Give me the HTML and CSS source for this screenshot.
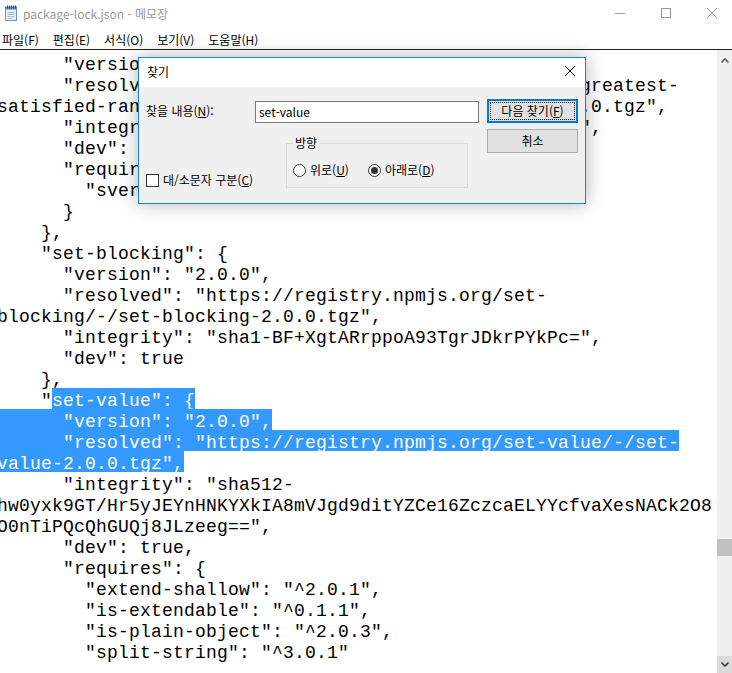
FILE: index.html
```html
<!DOCTYPE html>
<html lang="ko">

<head>
  <meta charset="UTF-8">
  <meta name="viewport" content="width=device-width, initial-scale=1.0">
  <title>package-lock.json - 메모장</title>
  <link rel="stylesheet" href="styles.css">
</head>

<body>
  <div class="window">
    <div class="titlebar">
      <svg class="app-icon" width="16" height="16" viewBox="0 0 16 16">
        <rect x="2.5" y="2.5" width="11" height="13" fill="#e8f0f8" stroke="#7d93ab" />
        <rect x="2" y="1.5" width="12" height="3" fill="#5b86b8" />
        <path d="M4.5 7.5h7M4.5 9.5h7M4.5 11.5h7M4.5 13.5h5" stroke="#a9bdd1" />
        <path d="M4.5 0.5v3M6.5 0.5v3M8.5 0.5v3M10.5 0.5v3M12.5 0.5v3" stroke="#3f4a58" />
      </svg>
      <span class="title">package-lock.json - 메모장</span>
      <div class="controls">
        <div class="ctl">
          <svg width="10" height="10" viewBox="0 0 10 10"><path d="M0 5.5h10" stroke="#9a9a9a" /></svg>
        </div>
        <div class="ctl">
          <svg width="10" height="10" viewBox="0 0 10 10"><rect x="0.5" y="0.5" width="9" height="9" fill="none" stroke="#9a9a9a" /></svg>
        </div>
        <div class="ctl">
          <svg width="10" height="10" viewBox="0 0 10 10"><path d="M0 0L10 10M10 0L0 10" stroke="#9a9a9a" /></svg>
        </div>
      </div>
    </div>

    <div class="menubar">
      <span>파일(F)</span>
      <span>편집(E)</span>
      <span>서식(O)</span>
      <span>보기(V)</span>
      <span>도움말(H)</span>
    </div>

    <div class="client">
      <div class="editor">
        <div class="lines">
          <div class="ln">      "version": "1.1.0",</div>
          <div class="ln">      "resolved": "https://registry.npmjs.org/semver-greatest-</div>
          <div class="ln">satisfied-range/-/semver-greatest-satisfied-range-1.1.0.tgz",</div>
          <div class="ln">      "integrity": "sha1-3r2fNcL+Oy2ZJr2iLw+7SwWYtWI=",</div>
          <div class="ln">      "dev": true,</div>
          <div class="ln">      "requires": {</div>
          <div class="ln">        "sver-compat": "^1.5.0"</div>
          <div class="ln">      }</div>
          <div class="ln">    },</div>
          <div class="ln">    "set-blocking": {</div>
          <div class="ln">      "version": "2.0.0",</div>
          <div class="ln">      "resolved": "https://registry.npmjs.org/set-</div>
          <div class="ln">blocking/-/set-blocking-2.0.0.tgz",</div>
          <div class="ln">      "integrity": "sha1-BF+XgtARrppoA93TgrJDkrPYkPc=",</div>
          <div class="ln">      "dev": true</div>
          <div class="ln">    },</div>
          <div class="ln">    "<span class="sel">set-value": {</span></div>
          <div class="ln"><span class="sel">      "version": "2.0.0",</span></div>
          <div class="ln"><span class="sel">      "resolved": "https://registry.npmjs.org/set-value/-/set-</span></div>
          <div class="ln"><span class="sel">value-2.0.0.tgz",</span></div>
          <div class="ln">      "integrity": "sha512-</div>
          <div class="ln">hw0yxk9GT/Hr5yJEYnHNKYXkIA8mVJgd9ditYZCe16ZczcaELYYcfvaXesNACk2O8</div>
          <div class="ln">O0nTiPQcQhGUQj8JLzeeg==",</div>
          <div class="ln">      "dev": true,</div>
          <div class="ln">      "requires": {</div>
          <div class="ln">        "extend-shallow": "^2.0.1",</div>
          <div class="ln">        "is-extendable": "^0.1.1",</div>
          <div class="ln">        "is-plain-object": "^2.0.3",</div>
          <div class="ln">        "split-string": "^3.0.1"</div>
        </div>
      </div>

      <div class="scrollbar">
        <div class="sb-btn sb-up">
          <svg width="8" height="5" viewBox="0 0 8 5"><path d="M0.5 4.5L4 1L7.5 4.5" fill="none" stroke="#606060" stroke-width="1.6" /></svg>
        </div>
        <div class="sb-track">
          <div class="sb-thumb"></div>
        </div>
        <div class="sb-btn sb-down">
          <svg width="8" height="5" viewBox="0 0 8 5"><path d="M0.5 0.5L4 4L7.5 0.5" fill="none" stroke="#404040" stroke-width="1.6" /></svg>
        </div>
      </div>
    </div>

    <!-- find dialog -->
    <div class="dialog">
      <div class="dlg-title">
        <span class="dlg-caption">찾기</span>
        <div class="dlg-close">
          <svg width="10" height="10" viewBox="0 0 10 10"><path d="M0 0L10 10M10 0L0 10" stroke="#000" /></svg>
        </div>
      </div>
      <div class="dlg-body">
        <div class="dlg-main">
          <div class="find-row">
            <label class="find-label">찾을 내용(<u>N</u>):</label>
            <div class="input">set-value</div>
          </div>
          <div class="options">
            <div class="check">
              <span class="check-box"></span>
              <span class="check-text">대/소문자 구분(<u>C</u>)</span>
            </div>
            <fieldset class="group">
              <legend>방향</legend>
              <div class="radios">
                <div class="radio opt-up">
                  <span class="radio-dot"></span>
                  <span class="radio-text">위로(<u>U</u>)</span>
                </div>
                <div class="radio">
                  <span class="radio-dot checked"></span>
                  <span class="radio-text">아래로(<u>D</u>)</span>
                </div>
              </div>
            </fieldset>
          </div>
        </div>
        <div class="dlg-buttons">
          <div class="btn btn-default"><span class="focus">다음 찾기(<u>F</u>)</span></div>
          <div class="btn">취소</div>
        </div>
      </div>
    </div>
  </div>
</body>

</html>
```

FILE: styles.css
```css
body {
  margin: 0px;
  background-color: #fff;
  font-family: "Noto Sans CJK KR", sans-serif;
}

.window {
  position: relative;
  width: 732px;
  height: 673px;
  display: flex;
  flex-direction: column;
  overflow: hidden;
  background-color: #fff;
}

/* title bar */

.titlebar {
  height: 31px;
  flex-shrink: 0;
  display: flex;
  align-items: center;
  padding-left: 3px;
}

.app-icon {
  margin-top: -6px;
  margin-right: 4px;
}

.title {
  margin-top: -3px;
  font-size: 12px;
  line-height: 16px;
  color: #999;
}

.controls {
  margin-left: auto;
  margin-right: -3px;
  display: flex;
  align-self: stretch;
}

.ctl {
  width: 46px;
  display: flex;
  justify-content: center;
  padding-top: 8px;
}

/* menu */

.menubar {
  height: 18px;
  flex-shrink: 0;
  display: flex;
  align-items: center;
  gap: 14px;
  padding-left: 2px;
  font-size: 12px;
  line-height: 18px;
  color: #000;
  border-bottom: 1px solid #1e1e1e;
}

/* edit area */

.client {
  flex: 1;
  display: flex;
  min-height: 0;
}

.editor {
  flex: 1;
  overflow: hidden;
  padding-top: 2px;
  font-family: "Liberation Mono", monospace;
  font-size: 18px;
  letter-spacing: 0.2px;
  color: #000;
}

.lines {
  margin-left: -3px;
}

.ln {
  height: 21px;
  line-height: 27px;
  white-space: pre;
}

.sel {
  display: inline-block;
  vertical-align: top;
  height: 21px;
  background-color: #3399ff;
  color: #fff;
}

.scrollbar {
  width: 15px;
  flex-shrink: 0;
  display: flex;
  flex-direction: column;
  background-color: #f0f0f0;
}

.sb-btn {
  height: 17px;
  display: flex;
  justify-content: center;
  align-items: center;
}

.sb-up svg {
  margin-top: 3px;
}

.sb-down {
  background-color: #dadada;
}

.sb-track {
  flex: 1;
  padding-top: 472px;
}

.sb-thumb {
  height: 17px;
  background-color: #c1c1c1;
}

/* find dialog */

.dialog {
  position: absolute;
  left: 138px;
  top: 57px;
  width: 448px;
  height: 147px;
  box-sizing: border-box;
  border: 1px solid #1883d7;
  background-color: #f0f0f0;
  box-shadow: 0 0 18px rgba(0, 0, 0, 0.3);
  display: flex;
  flex-direction: column;
  font-size: 12px;
  color: #000;
}

.dlg-title {
  height: 29px;
  flex-shrink: 0;
  display: flex;
  align-items: center;
  background-color: #fff;
}

.dlg-caption {
  padding-left: 8px;
  margin-top: -2px;
  line-height: 16px;
}

.dlg-close {
  margin-left: auto;
  width: 30px;
  display: flex;
  justify-content: center;
  margin-top: -3px;
}

.dlg-body {
  flex: 1;
  display: flex;
  padding: 12px 7px 0 7px;
}

.dlg-main {
  width: 333px;
}

.find-row {
  margin-top: 2px;
  height: 22px;
  display: flex;
  align-items: center;
}

.find-label {
  width: 109px;
  line-height: 16px;
  margin-top: -3px;
}

.input {
  width: 224px;
  height: 22px;
  box-sizing: border-box;
  border: 1px solid #7a7a7a;
  background-color: #fff;
  padding-left: 3px;
  line-height: 19px;
}

.options {
  margin-top: 13px;
  display: flex;
  align-items: flex-end;
}

.check {
  width: 140px;
  height: 16px;
  display: flex;
  align-items: center;
}

.check-box {
  width: 13px;
  height: 13px;
  box-sizing: border-box;
  border: 1px solid #333;
  background-color: #fff;
}

.check-text {
  margin-left: 4px;
  line-height: 16px;
}

.group {
  width: 182px;
  box-sizing: border-box;
  margin: 0px;
  padding: 0 0 9px 6px;
  border: 1px solid #dcdcdc;
}

.group legend {
  padding: 0 2px;
  line-height: 14px;
}

.radios {
  margin-top: 12px;
  height: 16px;
  display: flex;
  align-items: center;
}

.radio {
  display: flex;
  align-items: center;
}

.opt-up {
  width: 75px;
}

.radio-dot {
  width: 13px;
  height: 13px;
  box-sizing: border-box;
  border: 1px solid #333;
  border-radius: 50%;
  background-color: #fff;
  display: flex;
  justify-content: center;
  align-items: center;
}

.radio-dot.checked::after {
  content: "";
  width: 7px;
  height: 7px;
  border-radius: 50%;
  background-color: #333;
}

.radio-text {
  margin-left: 4px;
  line-height: 16px;
}

.dlg-buttons {
  width: 91px;
  margin-left: 8px;
  display: flex;
  flex-direction: column;
  gap: 6px;
}

.btn {
  height: 24px;
  box-sizing: border-box;
  border: 1px solid #adadad;
  background-color: #e1e1e1;
  display: flex;
  justify-content: center;
  align-items: center;
  line-height: 16px;
}

.btn-default {
  border: 2px solid #0078d7;
  padding: 1px;
  align-items: stretch;
}

.focus {
  flex: 1;
  border: 1px dotted #000;
  display: flex;
  justify-content: center;
  align-items: center;
}

u {
  text-underline-offset: 1px;
}
```
